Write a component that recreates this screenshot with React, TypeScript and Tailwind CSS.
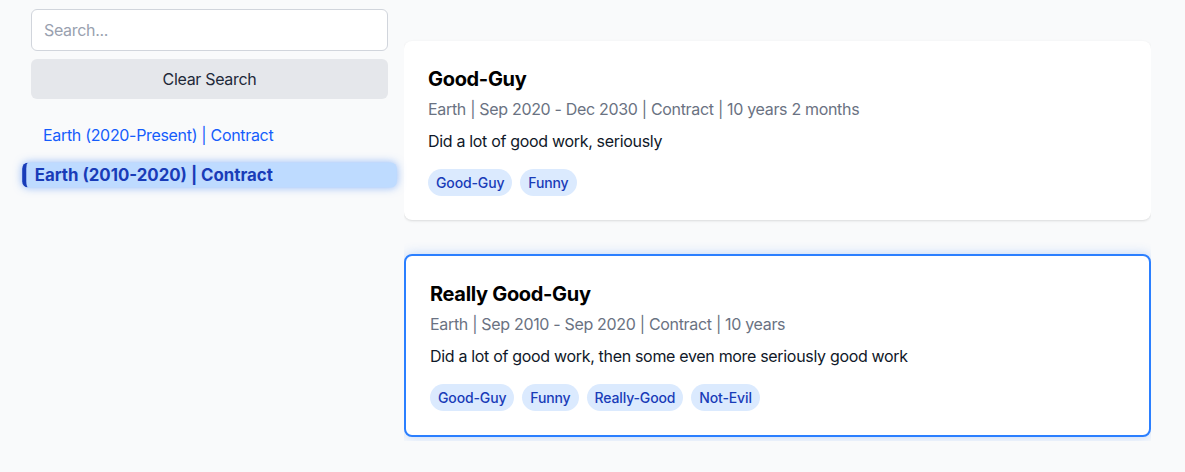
import React, { useState } from "react";

type Job = {
  id: number;
  title: string;
  label: string;
  meta: string;
  description: string;
  tags: string[];
};

const jobs: Job[] = [
  {
    id: 1,
    title: "Good-Guy",
    label: "Earth (2020-Present) | Contract",
    meta: "Earth | Sep 2020 - Dec 2030 | Contract | 10 years 2 months",
    description: "Did a lot of good work, seriously",
    tags: ["Good-Guy", "Funny"],
  },
  {
    id: 2,
    title: "Really Good-Guy",
    label: "Earth (2010-2020) | Contract",
    meta: "Earth | Sep 2010 - Sep 2020 | Contract | 10 years",
    description: "Did a lot of good work, then some even more seriously good work",
    tags: ["Good-Guy", "Funny", "Really-Good", "Not-Evil"],
  },
];

const App: React.FC = () => {
  const [query, setQuery] = useState("");
  const [selected, setSelected] = useState(2);

  return (
    <div
      className="flex h-screen gap-4 bg-gray-50 pt-[9px] pl-[31px] pr-[34px] text-base tracking-[-0.02em]"
      style={{ fontFamily: "Inter, 'Noto Sans', sans-serif" }}
    >
      {/* sidebar */}
      <div className="w-[357px] shrink-0">
        <input
          className="h-[42px] w-full rounded-md border border-gray-300 bg-white px-3 text-base text-gray-800 placeholder-gray-400 outline-none"
          placeholder="Search..."
          value={query}
          onChange={(e) => setQuery(e.target.value)}
        />
        <button
          className="mt-2 h-10 w-full rounded-md bg-gray-200 text-base text-gray-800"
          onClick={() => setQuery("")}
        >
          Clear Search
        </button>
        <ul className="mt-6 flex flex-col gap-4">
          {jobs.map((job) =>
            job.id === selected ? (
              <li
                key={job.id}
                className="scale-105 cursor-pointer rounded-md border-l-4 border-blue-800 bg-blue-200 pl-2 leading-6 font-bold tracking-normal text-blue-800 shadow-[0_0_8px_rgba(59,130,246,0.55)]"
                onClick={() => setSelected(job.id)}
              >
                {job.label}
              </li>
            ) : (
              <li
                key={job.id}
                className="cursor-pointer px-3 leading-6 text-blue-600"
                onClick={() => setSelected(job.id)}
              >
                {job.label}
              </li>
            )
          )}
        </ul>
      </div>

      {/* cards */}
      <div className="h-[432px] flex-1 overflow-hidden pt-8">
        {jobs.map((job) => (
          <div
            key={job.id}
            className={
              job.id === selected
                ? "mt-[34px] rounded-lg border-2 border-blue-500 bg-white p-6 shadow-[0_0_12px_rgba(59,130,246,0.3)]"
                : "mt-0 rounded-lg bg-white p-6 shadow-sm"
            }
          >
            <h2 className="text-xl leading-7 font-bold text-black">{job.title}</h2>
            <p className="mt-1 leading-6 text-gray-500">{job.meta}</p>
            <p className="mt-2 leading-6 text-gray-900">{job.description}</p>
            <div className="mt-4 flex gap-2">
              {job.tags.map((tag) => (
                <span
                  key={tag}
                  className="rounded-full bg-blue-100 px-2 py-1 text-sm leading-[19px] font-medium tracking-[-0.01em] text-blue-800"
                >
                  {tag}
                </span>
              ))}
            </div>
          </div>
        ))}
      </div>
    </div>
  );
};

export default App;
